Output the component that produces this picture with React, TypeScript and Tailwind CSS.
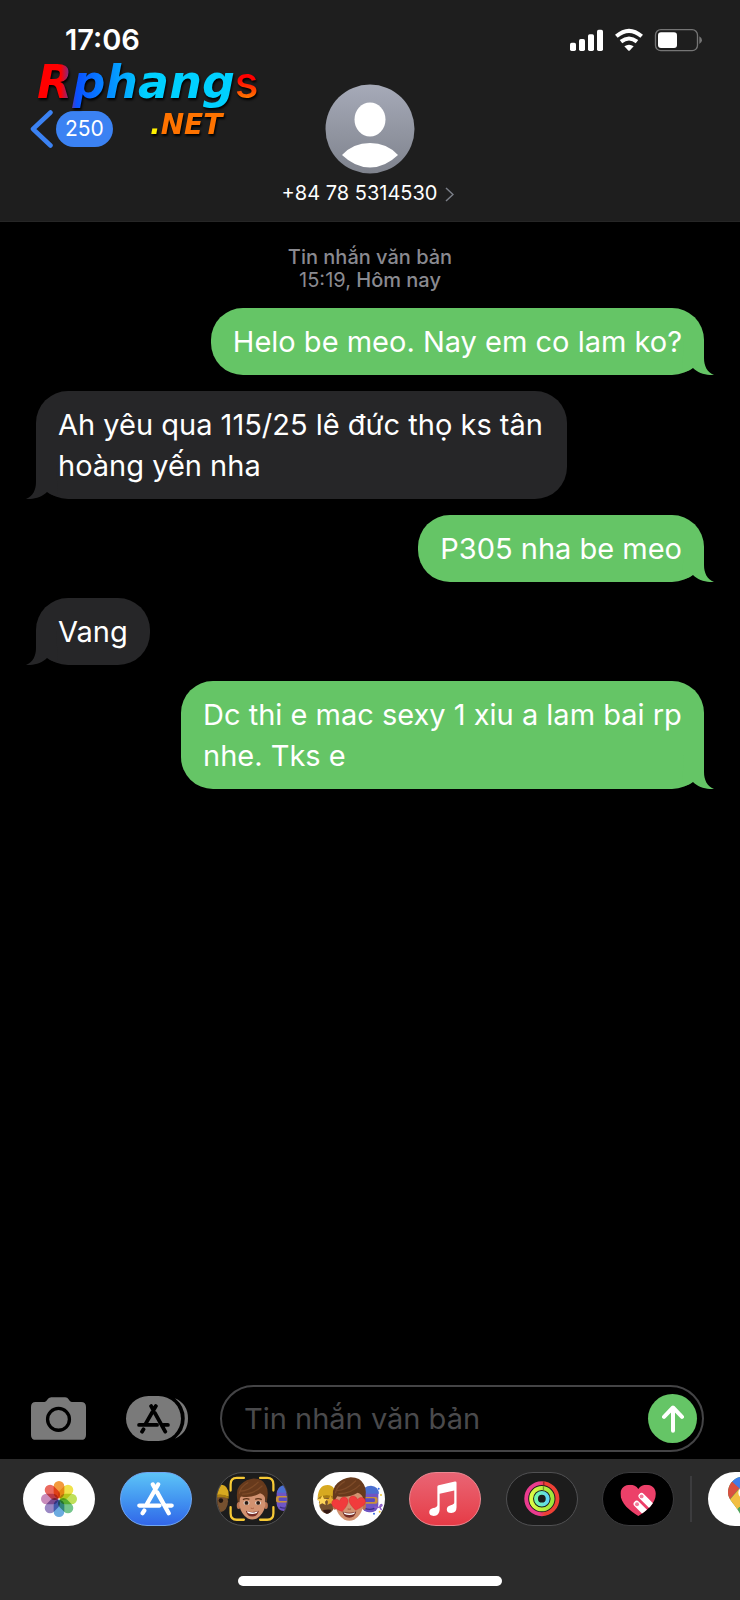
import type { ReactNode } from "react";

type Message = { text: string; mine: boolean };

const messages: Message[] = [
  { text: "Helo be meo. Nay em co lam ko?", mine: true },
  { text: "Ah yêu qua 115/25 lê đức thọ ks tân hoàng yến nha", mine: false },
  { text: "P305 nha be meo", mine: true },
  { text: "Vang", mine: false },
  { text: "Dc thi e mac sexy 1 xiu a lam bai rp nhe. Tks e", mine: true },
];

function Bubble({ text, mine }: Message) {
  return (
    <li
      className={
        mine
          ? "relative max-w-[523px] self-end rounded-[32px] bg-[#65c566] px-[22px] py-[13px]"
          : "relative max-w-[531px] self-start rounded-[32px] bg-[#262628] px-[22px] py-[13px]"
      }
    >
      <p className="text-[29px] leading-[41px] text-white">{text}</p>
      <svg
        aria-hidden="true"
        viewBox="0 0 32 34"
        className={
          mine
            ? "absolute -right-[10px] bottom-0 h-[34px] w-8 text-[#65c566]"
            : "absolute -left-[10px] bottom-0 h-[34px] w-8 -scale-x-100 text-[#262628]"
        }
      >
        <path d="M2 0H22V17C22 25 25 31 32 34C24 34.500 16 32 11 27C7 30 3 31 0 31Z" fill="currentColor" />
      </svg>
    </li>
  );
}

function StoreGlyph({ className }: { className: string }) {
  return (
    <svg aria-hidden="true" viewBox="0 0 112 102" className={className}>
      <path
        d="M64 7L30 66M7 71H68M90 71H105M48 7L53 16M61 31L96 94M22 86L17 94"
        fill="none"
        stroke="currentColor"
        strokeWidth="13"
        strokeLinecap="round"
      />
    </svg>
  );
}

function StatusIcons() {
  return (
    <svg aria-label="Tín hiệu, Wi-Fi, pin" role="img" viewBox="597 84 402 72" className="h-6 w-[134px]">
      <g fill="#fff">
        <rect x="600" y="128" width="18" height="25" rx="5" />
        <rect x="627" y="117" width="18" height="36" rx="5" />
        <rect x="654" y="103" width="18" height="50" rx="5" />
        <rect x="681" y="89" width="18" height="64" rx="5" />
        <path d="M763 139Q777 129 791 139L780 151Q777 154 774 151Z" />
        <rect x="864" y="97" width="57" height="47" rx="9" />
      </g>
      <path d="M739 109Q777 76 815 109M753 125Q777 106 801 125" fill="none" stroke="#fff" strokeWidth="12" />
      <rect x="856.500" y="89" width="126" height="63" rx="16" fill="none" stroke="#757575" strokeWidth="4" />
      <path d="M988 109Q996 113 996 121Q996 128 988 132Z" fill="#757575" />
    </svg>
  );
}

function Avatar() {
  return (
    <svg aria-hidden="true" viewBox="0 0 90 90" className="size-[90px]">
      <defs>
        <linearGradient id="avatar" x1="0" y1="0" x2="0" y2="1">
          <stop offset="0" stopColor="#a6aab8" />
          <stop offset="1" stopColor="#7f838d" />
        </linearGradient>
      </defs>
      <circle cx="45" cy="45" r="44.500" fill="url(#avatar)" />
      <ellipse cx="45" cy="35.500" rx="15.500" ry="17" fill="#fff" />
      <path d="M17 71Q28 59 45 59Q62 59 73 71Q60 83.500 45 83.500Q30 83.500 17 71Z" fill="#fff" />
    </svg>
  );
}

const petals = [
  { angle: 0, color: "#f39a3c" },
  { angle: 45, color: "#f0e24a" },
  { angle: 90, color: "#bfe05a" },
  { angle: 135, color: "#74c58c" },
  { angle: 180, color: "#6cabe0" },
  { angle: 225, color: "#9a88c4" },
  { angle: 270, color: "#c98cbb" },
  { angle: 315, color: "#ea6a60" },
];

function PhotosIcon() {
  return (
    <svg aria-hidden="true" viewBox="69 307 216 160" className="size-full isolate">
      {petals.map((p) => (
        <rect
          key={p.angle}
          x="161"
          y="333"
          width="32"
          height="52"
          rx="16"
          fill={p.color}
          className="mix-blend-multiply"
          transform={`rotate(${p.angle} 177 387)`}
        />
      ))}
    </svg>
  );
}

function Helper({ x, y }: { x: number; y: number }) {
  return (
    <g transform={`translate(${x} ${y})`}>
      <ellipse cx="0" cy="10" rx="24" ry="34" fill="#75502f" />
      <path d="M-28 -4Q-26 -42 2 -42Q28 -40 26 -4Q0 -16 -28 -4Z" fill="#d7a920" />
      <path d="M-28 -4Q0 -18 26 -4L26 2Q0 -9 -28 4Z" fill="#a87d13" />
    </g>
  );
}

function Robot({ x, y }: { x: number; y: number }) {
  return (
    <g transform={`translate(${x} ${y})`}>
      <rect x="-24" y="-38" width="50" height="76" rx="22" fill="#6f55c4" />
      <path d="M-22 -18Q-20 -42 4 -42Q26 -40 28 -18Z" fill="#4a6fd0" />
      <rect x="-26" y="-8" width="50" height="20" rx="6" fill="#c8913c" />
      <rect x="-18" y="-4" width="34" height="11" rx="4" fill="#5a4bc0" />
      <path d="M-14 26Q0 32 14 26" stroke="#3c2d85" strokeWidth="4" fill="none" />
    </g>
  );
}

function Boy({ hearts = false }: { hearts?: boolean }) {
  return (
    <g>
      <ellipse cx="-42" cy="20" rx="6" ry="11" fill="#b97452" />
      <ellipse cx="42" cy="20" rx="6" ry="11" fill="#b97452" />
      <path d="M-40 -14Q-40 -46 0 -46Q40 -46 40 -14V20Q34 48 14 60Q0 66 -14 60Q-34 48 -40 20Z" fill="#d29270" />
      <path d="M-45 10Q-54 -30 -34 -46Q-20 -60 4 -63Q32 -63 42 -42Q52 -26 44 12L39 -4Q36 -14 24 -18Q-2 -2 -35 -8Q-41 -2 -40 8Z" fill="#673a1c" />
      <path d="M-38 -24Q-10 -24 18 -52M-30 -15Q6 -16 30 -40M-40 -18Q-36 -38 -14 -50" fill="none" stroke="#7d4a27" strokeWidth="4" strokeLinecap="round" />
      <path d="M-20 36Q0 44 20 36Q16 54 0 54Q-16 54 -20 36Z" fill="#742c25" />
      <path d="M-17 38Q0 45 17 38L14 43Q0 49 -14 43Z" fill="#fff" />
      <path d="M-5 28Q0 31 5 28" fill="none" stroke="#aa6245" strokeWidth="3" />
      {hearts ? (
        <g fill="#f13b3c" stroke="#c9262b" strokeWidth="1">
          <path transform="translate(-26 14) rotate(-14) scale(0.95)" d="M0 24C-14 14 -27 4 -25 -8C-22 -20 -6 -21 0 -9C6 -21 22 -20 25 -8C27 4 14 14 0 24Z" />
          <path transform="translate(22 10) rotate(10) scale(0.95)" d="M0 24C-14 14 -27 4 -25 -8C-22 -20 -6 -21 0 -9C6 -21 22 -20 25 -8C27 4 14 14 0 24Z" />
        </g>
      ) : (
        <g>
          <ellipse cx="-18" cy="12" rx="9" ry="6" fill="#e9dcd4" />
          <ellipse cx="18" cy="12" rx="9" ry="6" fill="#e9dcd4" />
          <circle cx="-18" cy="12" r="6" fill="#2b1a12" />
          <circle cx="18" cy="12" r="6" fill="#2b1a12" />
          <path d="M-29 2Q-18 -4 -9 1M9 1Q18 -4 29 2" fill="none" stroke="#5d3318" strokeWidth="4" />
        </g>
      )}
    </g>
  );
}

function MemojiIcon() {
  return (
    <svg aria-hidden="true" viewBox="648 307 216 160" className="size-full">
      <Helper x={658} y={384} />
      <circle cx="660" cy="392" r="7" fill="#201511" />
      <Robot x={856} y={386} />
      <g transform="translate(757 387)">
        <Boy />
      </g>
      <path
        d="M690 361V342Q690 322 709 322H731M781 322H803Q822 322 822 342V361M822 412V431Q822 451 803 451H781M731 451H709Q690 451 690 431V412"
        fill="none"
        stroke="#f6c935"
        strokeWidth="7"
        strokeLinecap="round"
      />
    </svg>
  );
}

function StickersIcon() {
  return (
    <svg aria-hidden="true" viewBox="0 0 216 160" className="size-full">
      <Helper x={42} y={80} />
      <path d="M28 69L33 79L44 80L36 88L38 98L28 93L18 98L20 88L12 80L23 79Z" fill="#ffd65a" />
      <path d="M52 69L57 79L66 80L59 88L61 98L52 93L43 98L45 88L40 80L48 79Z" fill="#e5ad31" />
      <path d="M30 113Q44 110 55 112Q50 126 40 124Q32 122 30 113Z" fill="#351a14" />
      <Robot x={170} y={82} />
      <path d="M184 104Q202 108 207 100Q208 94 202 98Q198 104 206 113" fill="none" stroke="#8b5cc8" strokeWidth="4" />
      <g transform="translate(109 80) scale(1.04)">
        <Boy hearts />
      </g>
      <circle cx="197" cy="49" r="3" fill="#3467e4" />
      <circle cx="204" cy="68" r="3" fill="#f0c530" />
      <circle cx="200" cy="118" r="3" fill="#f0c530" />
      <circle cx="183" cy="124" r="3" fill="#3467e4" />
    </svg>
  );
}

function MusicIcon() {
  return (
    <svg aria-hidden="true" viewBox="118 307 215 160" className="size-full">
      <path
        d="M202 349Q202 346 206 345L256 333Q261 332 261 337V412Q261 429 245 430Q231 430 231 419Q231 409 243 406Q254 404 254 398V361L209 371V420Q208 438 191 439Q177 439 177 428Q177 418 189 415Q201 413 202 406Z"
        fill="#fff"
      />
    </svg>
  );
}

function ActivityIcon() {
  return (
    <svg aria-hidden="true" viewBox="408 307 215 160" className="size-full">
      <defs>
        <linearGradient id="move" x1="0" x2="1">
          <stop offset="0.400" stopColor="#ea3b8e" />
          <stop offset="0.600" stopColor="#ee4035" />
        </linearGradient>
        <linearGradient id="exercise" x1="0" x2="1">
          <stop offset="0" stopColor="#dcfb45" />
          <stop offset="1" stopColor="#9be63b" />
        </linearGradient>
        <linearGradient id="stand" x1="0" x2="1">
          <stop offset="0" stopColor="#74f7a9" />
          <stop offset="1" stopColor="#5fd5f4" />
        </linearGradient>
      </defs>
      <g fill="none" strokeWidth="12">
        <circle cx="515" cy="386" r="48" stroke="url(#move)" />
        <circle cx="515" cy="386" r="33" stroke="url(#exercise)" />
        <circle cx="515" cy="386" r="18" stroke="url(#stand)" />
      </g>
      <path d="M521 333V345" stroke="#8d2427" strokeWidth="4" />
      <path d="M520 348V360" stroke="#6e9127" strokeWidth="4" />
    </svg>
  );
}

function TouchIcon() {
  return (
    <svg aria-hidden="true" viewBox="697 307 214 160" className="size-full">
      <defs>
        <clipPath id="heart">
          <path d="M805 439C780 425 750 400 750 371C750 342 790 334 805 356C820 334 859 342 859 371C859 400 830 425 805 439Z" />
        </clipPath>
      </defs>
      <g clipPath="url(#heart)">
        <rect x="745" y="335" width="120" height="110" fill="#ec4069" />
        <path d="M800 402L832 434M815 378L856 419" stroke="#fff" strokeWidth="19" strokeLinecap="round" />
        <circle cx="801" cy="403" r="6" fill="#f27c9a" />
        <circle cx="815" cy="379" r="6" fill="#f27c9a" />
      </g>
    </svg>
  );
}

function MapsIcon() {
  return (
    <svg aria-hidden="true" viewBox="1013 307 216 160" className="size-full">
      <defs>
        <clipPath id="pin">
          <path d="M1121 320C1093 320 1073 341 1073 368C1073 392 1105 412 1112 440Q1121 460 1130 440C1137 412 1169 392 1169 368C1169 341 1149 320 1121 320Z" />
        </clipPath>
      </defs>
      <g clipPath="url(#pin)">
        <rect x="1070" y="315" width="105" height="145" fill="#4ea35a" />
        <path d="M1065 310H1180V330L1121 380L1085 335Z" fill="#3f7de8" />
        <path d="M1070 330L1084 334L1107 355L1075 392H1065Z" fill="#d95040" />
        <path d="M1076 392L1137 322L1145 370L1095 424Z" fill="#f2be42" />
      </g>
      <circle cx="1121" cy="368" r="17" fill="#fff" />
    </svg>
  );
}

const dockItems: { label: string; look: string; icon: ReactNode }[] = [
  { label: "Ảnh", look: "bg-white", icon: <PhotosIcon /> },
  {
    label: "App Store",
    look: "bg-linear-to-b from-[#5dc3f7] to-[#3366e8] border border-[#6fa6f2]",
    icon: <StoreGlyph className="h-[34px] w-[37px] text-white" />,
  },
  { label: "Memoji", look: "bg-[#1c1c1c] border border-[#505052]", icon: <MemojiIcon /> },
  { label: "Nhãn dán", look: "bg-white", icon: <StickersIcon /> },
  {
    label: "Nhạc",
    look: "bg-linear-to-b from-[#e96474] to-[#e63a46] border border-[#ec8790]",
    icon: <MusicIcon />,
  },
  { label: "Thể dục", look: "bg-[#1c1c1c] border border-[#505052]", icon: <ActivityIcon /> },
  { label: "Digital Touch", look: "bg-black border border-[#3a3a3c]", icon: <TouchIcon /> },
];

export default function App() {
  return (
    <div className="flex min-h-screen flex-col overflow-hidden bg-black font-['Inter','Noto_Sans',sans-serif] text-white">
      <header className="relative flex flex-col border-b border-[#262626] bg-[#1e1e1e] pb-[13px]">
        <div className="flex items-center justify-between pt-6 pr-[37px] pl-[65px]">
          <time className="text-[29px] leading-8 font-semibold">17:06</time>
          <StatusIcons />
        </div>
        <div className="grid grid-cols-3 items-center pt-7">
          <button type="button" aria-label="Quay lại, 250 tin nhắn" className="flex items-center gap-[3px] justify-self-start pl-[30px]">
            <svg aria-hidden="true" viewBox="0 0 23 38" className="h-[38px] w-[23px]">
              <path d="M20.500 2.500L3 19L20.500 35.500" fill="none" stroke="#3b82f3" strokeWidth="4.500" strokeLinecap="round" strokeLinejoin="round" />
            </svg>
            <span className="rounded-full bg-[#3b82f3] px-[9px] text-[21px] leading-9">250</span>
          </button>
          <span className="justify-self-center">
            <Avatar />
          </span>
        </div>
        <button type="button" className="mt-[5px] flex items-center gap-2 self-center pr-1 text-[20px] leading-[29px]">
          +84 78 5314530
          <svg aria-hidden="true" viewBox="0 0 9 15" className="mt-[2px] h-[15px] w-[9px]">
            <path d="M1 1L8 7.500L1 14" fill="none" stroke="#7b7f88" strokeWidth="1.500" />
          </svg>
        </button>
        <div className="absolute top-[55px] left-[37px] font-['DejaVu_Sans',sans-serif] leading-[54px] font-bold italic">
          <div className="flex h-[54px] items-baseline drop-shadow-[1px_2px_1px_#000]">
            <span className="bg-linear-to-r/srgb from-[#ff0000] from-12% via-[#0a50ff] via-20% to-[#00d0ff] to-55% bg-clip-text text-[46px] text-transparent">
              Rphang
            </span>
            <span className="bg-linear-to-b/srgb from-[#ff0000] from-45% to-[#ff7a00] to-80% bg-clip-text font-['Inter',sans-serif] text-[44px] font-medium text-transparent not-italic">
              s
            </span>
          </div>
          <div className="pl-[113px] text-[28px] leading-8 text-[#ff7300] drop-shadow-[1px_2px_1px_#000]">
            <span className="text-[#fff000]">.</span>NET
          </div>
        </div>
      </header>

      <main className="flex-1 pt-6">
        <p className="text-center text-[20px] leading-[23px] font-medium text-[#8a8a90]">
          Tin nhắn văn bản
          <br />
          <span className="font-normal">15:19,</span> Hôm nay
        </p>
        <ul className="mt-4 flex flex-col gap-4 px-9">
          {messages.map((m) => (
            <Bubble key={m.text} {...m} />
          ))}
        </ul>
      </main>

      <footer>
        <form className="flex items-center pr-9 pb-[7px] pl-[31px]" onSubmit={(e) => e.preventDefault()}>
          <button type="button" aria-label="Máy ảnh">
            <svg aria-hidden="true" viewBox="93 81 166 129" className="h-[43px] w-[55px]">
              <path
                d="M107 96H134Q139 95 142 89Q146 81 154 81H196Q203 81 207 88Q210 95 216 96H244Q259 96 259 111V195Q259 210 244 210H108Q93 210 93 195V111Q93 96 107 96Z"
                fill="#7a7a7a"
              />
              <circle cx="176" cy="148" r="33" fill="none" stroke="#000" strokeWidth="10" />
            </svg>
          </button>
          <button type="button" aria-label="Ứng dụng" className="ml-10 flex items-center">
            <span className="flex h-[45px] w-[55px] items-center justify-center rounded-[23px] bg-[#7a7a7a]">
              <StoreGlyph className="h-[30px] w-[33px] text-black" />
            </span>
            <svg aria-hidden="true" viewBox="525 83 40 124" className="-ml-[6px] h-[41px] w-[13px]">
              <path d="M525 83Q565 101 565 145Q565 189 525 207Q555 182 555 145Q555 108 525 83Z" fill="#7a7a7a" />
            </svg>
          </button>
          <div className="ml-8 flex h-[67px] min-w-0 flex-1 items-center rounded-full border-2 border-[#444446] pr-[5px] pl-[22px]">
            <input
              type="text"
              aria-label="Tin nhắn văn bản"
              placeholder="Tin nhắn văn bản"
              className="min-w-0 flex-1 bg-transparent text-[29px] leading-[41px] outline-none placeholder:text-[#4a4a4c]"
            />
            <button type="submit" aria-label="Gửi" className="flex size-[49px] items-center justify-center rounded-full bg-[#65c566]">
              <svg aria-hidden="true" viewBox="875 104 66 83" className="h-7 w-[22px]">
                <path d="M908 181V112M881 139L908 111L935 139" fill="none" stroke="#fff" strokeWidth="12" strokeLinecap="round" strokeLinejoin="round" />
              </svg>
            </button>
          </div>
        </form>
        <div className="bg-[#2b2b2b] pt-[13px] pb-[14px]">
          <nav aria-label="Ứng dụng iMessage" className="flex items-center overflow-hidden pl-[23px]">
            <div className="flex flex-1 justify-between">
              {dockItems.map((item) => (
                <button
                  key={item.label}
                  type="button"
                  aria-label={item.label}
                  className={`flex h-[54px] w-[72px] items-center justify-center overflow-hidden rounded-full ${item.look}`}
                >
                  {item.icon}
                </button>
              ))}
            </div>
            <span className="mx-4 h-[46px] w-[2px] bg-[#3c3c3e]" />
            <div className="flex w-8">
              <button type="button" aria-label="Google Maps" className="h-[54px] w-[72px] shrink-0 overflow-hidden rounded-full bg-white">
                <MapsIcon />
              </button>
            </div>
          </nav>
          <div className="mx-auto mt-[50px] h-[10px] w-[264px] rounded-full bg-white" />
        </div>
      </footer>
    </div>
  );
}
